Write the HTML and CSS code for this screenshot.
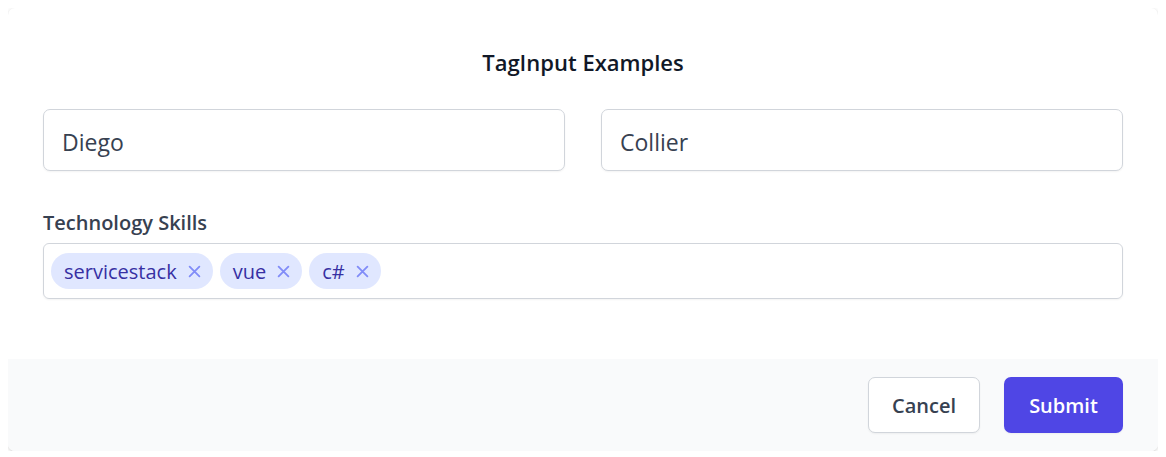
FILE: index.html
```html
<!DOCTYPE html>
<html>
<head>
<meta charset="utf-8">
<link rel="stylesheet" href="styles.css">
</head>
<body>
<form class="card">
  <div class="card-body">
    <h3 class="title">TagInput Examples</h3>
    <div class="row">
      <div class="field"><input class="text-input" type="text" value="Diego"></div>
      <div class="field"><input class="text-input" type="text" value="Collier"></div>
    </div>
    <div class="skills">
      <label class="label">Technology Skills</label>
      <div class="tag-box">
        <span class="tag">servicestack<span class="tag-x"><svg viewBox="0 0 12 12" width="13" height="13"><path d="M1.5 1.5l9 9M10.5 1.5l-9 9" stroke="currentColor" stroke-width="1.7" stroke-linecap="round"/></svg></span></span>
        <span class="tag">vue<span class="tag-x"><svg viewBox="0 0 12 12" width="13" height="13"><path d="M1.5 1.5l9 9M10.5 1.5l-9 9" stroke="currentColor" stroke-width="1.7" stroke-linecap="round"/></svg></span></span>
        <span class="tag">c#<span class="tag-x"><svg viewBox="0 0 12 12" width="13" height="13"><path d="M1.5 1.5l9 9M10.5 1.5l-9 9" stroke="currentColor" stroke-width="1.7" stroke-linecap="round"/></svg></span></span>
      </div>
    </div>
  </div>
  <div class="card-footer">
    <button type="button" class="btn btn-cancel">Cancel</button>
    <button type="button" class="btn btn-submit">Submit</button>
  </div>
</form>
</body>
</html>
```
FILE: styles.css
```css
* { box-sizing: border-box; }
body {
  margin: 8px;
  font-family: "Open Sans", "Noto Sans", sans-serif;
  background: #ffffff;
}
.card {
  width: 1150px;
  height: 443px;
  border-radius: 7px;
  background: #fff;
  box-shadow: 0 1px 4px rgba(0,0,0,0.14), 0 1px 2px rgba(0,0,0,0.06);
  overflow: hidden;
  display: flex;
  flex-direction: column;
}
.card-body {
  padding: 0 35px;
  height: 351px;
}
.title {
  margin: 0;
  padding-top: 39px;
  height: 101px;
  text-align: center;
  font-size: 22px;
  font-weight: 600;
  color: #111827;
  line-height: 30px;
}
.row {
  display: flex;
  gap: 36px;
}
.field { flex: 1; }
.text-input {
  width: 100%;
  height: 62px;
  border: 1px solid #d1d5db;
  border-radius: 7px;
  padding: 3px 18px 0;
  font-family: inherit;
  font-size: 23px;
  color: #374151;
  box-shadow: 0 1px 2px rgba(0,0,0,0.05);
  outline: none;
}
.skills { margin-top: 38px; }
.label {
  display: block;
  font-size: 20px;
  font-weight: 600;
  color: #374151;
  line-height: 28px;
  margin-bottom: 6px;
}
.tag-box {
  height: 56px;
  border: 1px solid #d1d5db;
  border-radius: 6px;
  box-shadow: 0 1px 2px rgba(0,0,0,0.05);
  display: flex;
  align-items: center;
  gap: 7px;
  padding: 0 7px;
}
.tag {
  display: inline-flex;
  align-items: center;
  height: 36px;
  border-radius: 18px;
  background: #e0e7ff;
  color: #3730a3;
  font-size: 20px;
  font-weight: 500;
  padding: 0 12px 0 13px;
}
.tag-x {
  display: inline-flex;
  color: #818cf8;
  margin-left: 11px;
}
.card-footer {
  flex: 1;
  background: #f9fafb;
  display: flex;
  justify-content: flex-end;
  align-items: flex-start;
  gap: 24px;
  padding: 18px 35px 0;
}
.btn {
  height: 56px;
  border-radius: 7px;
  font-family: inherit;
  font-size: 20px;
  font-weight: 600;
  padding: 0;
  cursor: pointer;
}
.btn-cancel {
  width: 112px;
  background: #fff;
  border: 1px solid #d1d5db;
  color: #374151;
  box-shadow: 0 1px 2px rgba(0,0,0,0.05);
}
.btn-submit {
  width: 119px;
  background: #4f46e5;
  border: 1px solid transparent;
  color: #fff;
  box-shadow: 0 1px 2px rgba(0,0,0,0.05);
}
```
